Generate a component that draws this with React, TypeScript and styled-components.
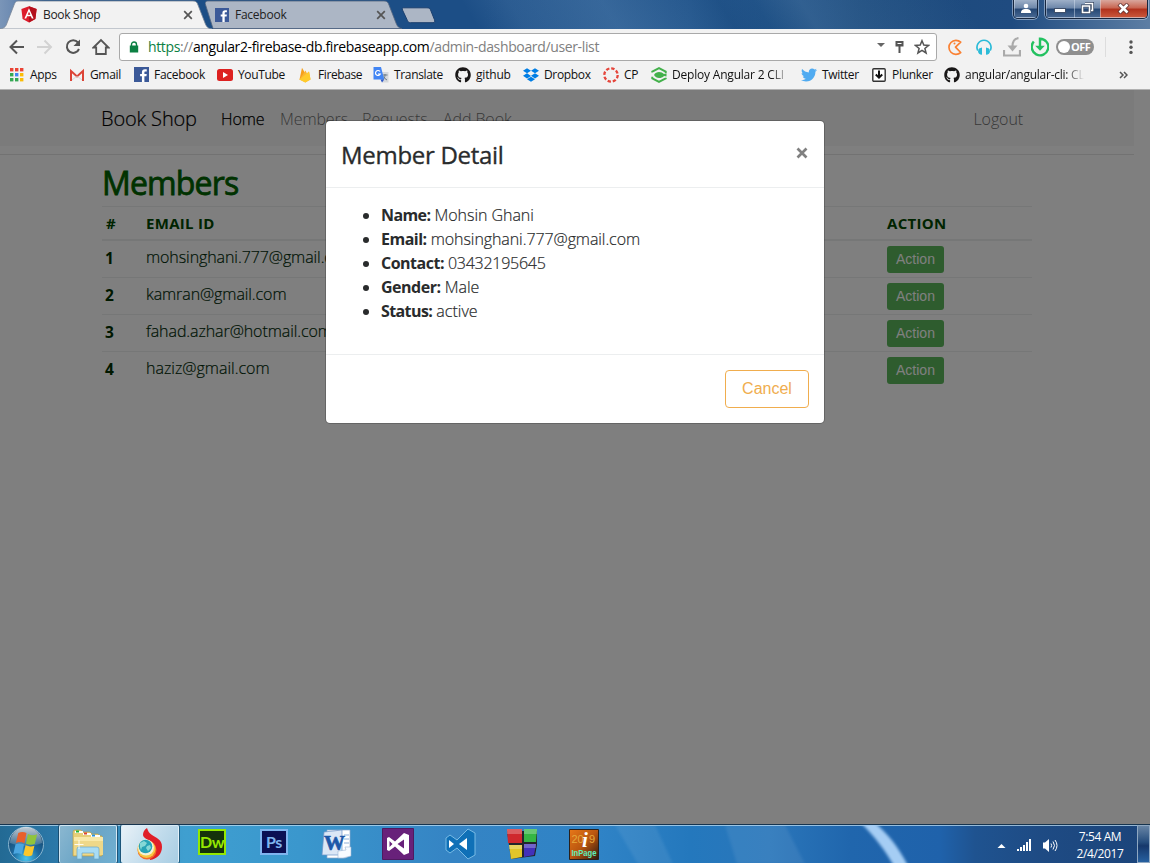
import React from 'react';
import styled, { createGlobalStyle, css } from 'styled-components';
import { FaGithub, FaTwitter, FaDropbox } from 'react-icons/fa';

const Global = createGlobalStyle`
  *{box-sizing:border-box}
  body{margin:0;font-family:"Open Sans","Noto Sans",sans-serif;overflow:hidden}
  svg{display:block;flex:none}
`;

const Screen = styled.div`width:1150px;height:863px;display:flex;flex-direction:column;overflow:hidden;`;

/* ---------- browser chrome ---------- */
const TabStrip = styled.div`
  height:29px;display:flex;align-items:flex-start;position:relative;flex:none;
  background:
    linear-gradient(90deg,#7a95b8 0,#6d8bb2 12px,transparent 45px),
    linear-gradient(58deg,transparent 0 41%,rgba(120,160,200,.16) 45%,rgba(120,160,200,.26) 53%,rgba(10,50,100,.12) 63%,transparent 66%,rgba(110,150,190,.24) 70%,transparent 84%),
    linear-gradient(90deg,#1c4e86 0,#1c4e86 42%,#24588f 60%,#1b4a7c 75%,#1f4b80 88%,#5d7ea4 100%);
`;
const Tab = styled.div<{ $w: number; $front?: boolean; $pad: number }>`
  position:relative;width:${p => p.$w}px;height:29px;display:flex;align-items:center;
  padding:0 ${p => (p.$front ? 19 : 17)}px 0 ${p => p.$pad}px;z-index:${p => (p.$front ? 2 : 1)};
  & + &{margin-left:-7px}
`;
const TabShape = styled.svg`position:absolute;left:0;top:0;z-index:-1;`;
const TabTitle = styled.span<{ $ls: number }>`font-size:12px;line-height:16px;color:#222;flex:1;margin-left:6px;white-space:nowrap;letter-spacing:${p => p.$ls}px;`;
const NewTab = styled.svg`margin:7px 0 0 -2px;`;
const Spacer = styled.div`flex:1;`;
const WindowButtons = styled.div`
  display:flex;height:19px;border:1px solid #16263f;border-top:0;border-radius:0 0 5px 5px;overflow:hidden;
  box-shadow:0 0 0 1px rgba(200,215,235,.55);
  & + &{margin:0 2px 0 7px}
`;
const WinBtn = styled.div<{ $w: number; $close?: boolean }>`
  width:${p => p.$w}px;height:18px;display:flex;align-items:center;justify-content:center;padding-bottom:2px;
  background:${p => (p.$close
    ? 'linear-gradient(#d9a79d 0,#c8634f 45%,#b0311c 50%,#cc5a3d 100%)'
    : 'linear-gradient(#9eb0c8 0,#6c86a9 45%,#244673 50%,#4a6a94 100%)')};
  box-shadow:inset 0 -1px 0 rgba(220,230,245,.6),inset 1px 0 0 rgba(220,230,245,.45);
`;

const Toolbar = styled.div`height:36px;flex:none;background:#f2f2f2;display:flex;align-items:center;padding:0 11px 0 8px;`;
const NavIcons = styled.div`display:flex;gap:10px;width:111px;`;
const AddressBar = styled.div`
  width:818px;height:28px;background:#fff;border:1px solid #a9a9a9;border-radius:3px;
  display:flex;align-items:center;padding:0 6px 0 9px;
`;
const Url = styled.div`
  font-size:14px;line-height:20px;letter-spacing:-.36px;color:#000;flex:1;margin-left:9px;white-space:nowrap;
`;
const Secure = styled.span`color:#0b8043;`;
const Muted = styled.span`color:#808080;`;
const UrlActions = styled.div`display:flex;align-items:center;gap:9px;`;
const Extensions = styled.div`display:flex;align-items:center;gap:10px;margin-left:9px;`;
const Toggle = styled.div`
  width:38px;height:16px;border-radius:8px;background:#8f8f8f;color:#fff;font:700 11px/16px "Open Sans",sans-serif;
  padding-left:15px;letter-spacing:-.5px;position:relative;margin-left:-3px;
  &::before{content:"";position:absolute;left:2px;top:2px;width:12px;height:12px;border-radius:50%;background:#fff}
`;
const Divider = styled.div`width:1px;height:20px;background:#ddd;margin-left:11px;`;
const Dots = styled.svg`margin-left:23px;`;

const Bookmarks = styled.div`
  height:25px;flex:none;background:#f2f2f2;border-bottom:1px solid #b1b1b1;display:flex;padding-left:9px;
`;
const Bookmark = styled.div<{ $w: number }>`width:${p => p.$w}px;display:flex;align-items:center;gap:5px;height:19px;flex:none;`;
const BookmarkText = styled.span<{ $ls: number; $fade?: number }>`
  font-size:12px;line-height:16px;color:#111;white-space:nowrap;letter-spacing:${p => p.$ls}px;
  ${p => p.$fade && css`width:${p.$fade}px;mask-image:linear-gradient(90deg,#000 84%,transparent 100%);`}
`;

/* ---------- page ---------- */
const Viewport = styled.main`height:734px;flex:none;position:relative;background:#fff;overflow:hidden;color:#292b2c;`;
const PageBody = styled.div`width:1134px;`;
const Navbar = styled.nav`height:56px;background:#f7f7f7;padding:1px 111px 0 101px;display:flex;align-items:center;`;
const Brand = styled.span`font-size:20px;line-height:30px;letter-spacing:-.15px;font-weight:300;width:120px;color:#000;-webkit-text-stroke:.2px;`;
const NavLink = styled.span<{ $w?: number; $active?: boolean }>`
  font-size:16px;line-height:24px;font-weight:300;
  color:${p => (p.$active ? '#000' : '#707070')};letter-spacing:${p => (p.$active ? -.1 : -.1)}px;
  ${p => p.$active && css`-webkit-text-stroke:.25px;`}
  ${p => p.$w && css`width:${p.$w}px;`} white-space:nowrap;
`;
const Rule = styled.hr`border:0;border-top:1px solid #e5e5e5;margin:8px 0 0;`;
const Container = styled.section`margin:0 102px;color:#006400;`;
const Title = styled.h1`font-size:32px;line-height:36px;font-weight:400;margin:10px 0 5px;letter-spacing:-.85px;color:#006400;-webkit-text-stroke:.8px;`;
const Row = styled.div<{ $head?: boolean }>`
  display:grid;grid-template-columns:40px 741px 1fr;align-items:center;height:${p => (p.$head ? 33 : 37)}px;
  border-top:1px solid #eceeef;padding-left:4px;font-size:${p => (p.$head ? 15 : 16)}px;
  letter-spacing:${p => (p.$head ? .3 : 0)}px;
  font-weight:${p => (p.$head ? 700 : 300)};color:${p => (p.$head ? '#004800' : '#002a08')};
  ${p => !p.$head && css`&:nth-child(3){border-top:2px solid #eceeef;height:38px}`}
`;
const Index = styled.b`color:#003000;font-size:15.500px;font-weight:700;padding-bottom:3px;margin-left:-1px;`;
const Email = styled.span<{ $ls: number }>`letter-spacing:${p => p.$ls}px;padding-bottom:4px;-webkit-text-stroke:.2px;`;
const ActionBtn = styled.button`
  display:block;width:57px;height:27px;border:0;border-radius:3px;background:#5cb85c;color:#fff;padding:0;
  font:14px/21px "Liberation Sans",sans-serif;
`;
const Backdrop = styled.div`position:absolute;inset:0;background:rgba(0,0,0,.5);`;
const Dialog = styled.section`
  position:absolute;left:325px;top:30px;width:500px;height:304px;background:#fff;background-clip:padding-box;
  border:1px solid rgba(0,0,0,.2);border-radius:5px;display:flex;flex-direction:column;
`;
const DialogHeader = styled.header`
  height:67px;border-bottom:1px solid #eceeef;padding:0 16px 2px 15px;display:flex;align-items:center;justify-content:space-between;
`;
const DialogTitle = styled.h4`margin:3px 0 0;font-size:24px;line-height:36px;font-weight:400;letter-spacing:-.3px;-webkit-text-stroke:.35px;`;
const DialogBody = styled.div`height:167px;padding:15px;border-bottom:1px solid #eceeef;`;
const Details = styled.ul`margin:0;padding-left:40px;font-size:16px;line-height:24px;`;
const Detail = styled.li<{ $ls: number }>`letter-spacing:${p => p.$ls}px;font-weight:300;`;
const Value = styled.span`-webkit-text-stroke:.2px;`;
const Label = styled.b<{ $ls: number }>`font-weight:700;letter-spacing:${p => p.$ls}px;`;
const DialogFooter = styled.footer`flex:1;padding:15px;display:flex;justify-content:flex-end;`;
const CancelBtn = styled.button`
  width:84px;height:38px;border:1px solid #f0ad4e;border-radius:4px;background:#fff;color:#f0ad4e;padding:0;
  font:16px/24px "Liberation Sans",sans-serif;
`;

/* ---------- taskbar ---------- */
const Taskbar = styled.footer`
  height:39px;flex:none;border-top:1px solid #17344e;display:flex;position:relative;overflow:hidden;
  box-shadow:inset 0 1px 0 rgba(190,220,240,.75);
  background:linear-gradient(90deg,#236a94 0,#2b78a8 55px,#3f9fd0 185px,#3a97cd 300px,#3584c4 450px,#2f83c6 600px,#2478bd 690px,#2a76ba 770px,#2066ad 850px,#1f62ab 940px,#1f5390 975px,#1e4b84 1040px,#1b447a 1150px);
`;
const Streak = styled.svg`position:absolute;left:590px;top:0;`;
const StartSlot = styled.div`width:59px;padding:1px 0 0 7px;position:relative;`;
const TaskButton = styled.div<{ $on?: 'open' | 'active' }>`
  width:58px;height:38px;margin-right:4px;display:flex;align-items:center;justify-content:center;position:relative;
  ${p => p.$on && css`
    border:1px solid rgba(225,240,250,.85);border-bottom:0;border-radius:2px;box-shadow:0 0 0 1px rgba(15,55,85,.65);
    background:${p.$on === 'active'
      ? 'linear-gradient(120deg,#e8f1f7,#c2dcec 55%,#a8cde3)'
      : 'linear-gradient(120deg,#8ab7d0,#6ba5c6 50%,#70b0d2)'};
  `}
`;
const SquareIcon = styled.div<{ $bg: string; $fg: string; $s: number }>`
  width:${p => p.$s}px;height:${p => p.$s - 2}px;border:2px solid ${p => p.$fg};background:${p => p.$bg};color:${p => p.$fg};
  display:flex;align-items:center;justify-content:center;font:700 16px/20px Lato,sans-serif;letter-spacing:-.4px;
  margin-bottom:4px;
`;
const Tray = styled.div`display:flex;align-items:center;gap:10px;position:relative;padding-top:3px;margin-right:0;`;
const Clock = styled.div`
  position:relative;width:72px;text-align:center;color:#fff;font-size:12px;line-height:17px;letter-spacing:-.4px;
  padding:3px 2px 0 0;margin:0 0 0 7px;white-space:nowrap;
`;
const ShowDesktop = styled.div`
  position:relative;width:13px;height:38px;border:1px solid #8fa8c2;background:linear-gradient(#6784a5,#254d7d 45%,#16386b 55%,#2760a0);
`;

const FacebookIcon = ({ s = 14 }: { s?: number }) => (
  <svg width={s} height={s} viewBox="0 0 14 14"><path fill="#3b5998" d="M0 0h14v14H0z" /><path fill="#fff" d="M7.4 14V8.6H5.7V6.5h1.7V5c0-1.9 1-2.8 2.8-2.8h1.7v2.1h-1.1c-.9 0-1.1.3-1.1 1v1.2h2.2l-.3 2.1H9.7V14z" /></svg>
);
const CloseIcon = () => (
  <svg width="10" height="10" viewBox="0 0 10 10"><path d="M1.2 1.2l7.6 7.6M8.8 1.2L1.2 8.8" stroke="#555" strokeWidth="1.7" /></svg>
);
const AngularIcon = () => (
  <svg width="16" height="17" viewBox="0 0 16 17"><path fill="#dd1b2b" d="M8 .3l7.6 2.7-1.2 10L8 16.6 1.6 13 .4 3z" /><path fill="#b3101c" d="M8 .3l7.6 2.7-1.2 10L8 16.6z" /><path fill="#fff" fillRule="evenodd" d="M8 2.2L3.4 12.6h1.8l.9-2.3h3.8l.9 2.3h1.8zM8 5.7l1.3 3.1H6.7z" /></svg>
);

const AppsIcon = () => {
  const c = ['#ea4335', '#ea4335', '#ea4335', '#34a853', '#4285f4', '#fbbc05', '#34a853', '#34a853', '#fbbc05'];
  return <svg width="16" height="16">{c.map((f, i) => <rect key={i} x={1 + (i % 3) * 5} y={1 + Math.floor(i / 3) * 5} width="3.4" height="3.4" fill={f} />)}</svg>;
};
const GmailIcon = () => <svg width="16" height="16"><path fill="#f3f3f3" d="M1 3h14v11H1z" /><path fill="none" stroke="#dc4437" strokeWidth="2" d="M2 14V4l6 5.5L14 4v10" /><path d="M3 13l5-4 5 4" fill="none" stroke="#ccc" strokeWidth=".7" /></svg>;
const YoutubeIcon = () => <svg width="16" height="16"><rect y="2" width="16" height="12" rx="2.5" fill="#dd2120" /><path fill="#fff" d="M6 5l5 3-5 3z" /></svg>;
const FirebaseIcon = () => <svg width="16" height="16"><path fill="#f6a01a" d="M2.5 12.5L5 .8 8 6l-4 7z" /><path fill="#fbb533" d="M2.5 12.5l6-9 1.5 3 2-2 1.5 8-5.2 3z" /><path fill="#ffcb2b" d="M2.5 12.5L12 4.5l1.5 8-5.2 3z" /></svg>;
const TranslateIcon = () => <svg width="16" height="16"><path fill="#d5d8dc" d="M7 5h8.5v10.5H9z" /><path d="M9.5 8h5M12 7v1c0 2-1 4-2.5 5M10.5 9.5c.7 1.6 2 2.7 3.5 3.5" fill="none" stroke="#6d7a85" /><path fill="#4285f4" d="M.5 0H8l3.2 12.5H.5z" /><path fill="#2a56c6" d="M7.5 12.5h3.7L9 15.5z" /><path d="M7 4.5A2.5 2.5 0 107.3 7H5" fill="none" stroke="#fff" strokeWidth="1.2" /></svg>;
const CpIcon = () => <svg width="16" height="16"><circle cx="8" cy="8" r="6.7" fill="none" stroke="#e5453b" strokeWidth="2.3" strokeDasharray="3.4 1.86" /></svg>;
const CodeshipIcon = () => <svg width="16" height="16"><path d="M1.3 5.4V4.7L8 1.2l6.7 3.5v1.6M1.3 9.8v1.5L8 14.8l6.7-3.5v-.6" fill="none" stroke="#43b14b" strokeWidth="2" /><path fill="#43b14b" d="M3 8c1.2-2 3-2.9 5-2.9S11.800 6 13 7l2.500-.5v3L13 9c-1.200 1.500-3 2-5 2S4.200 10 3 8z" /></svg>;
const PlunkerIcon = () => <svg width="16" height="14"><rect x="1.800" y=".8" width="12.400" height="12.400" rx="1" fill="#fff" stroke="#333" strokeWidth="1.400" /><path d="M8 2.500v6.500M4.800 6.500L8 9.700l3.200-3.200" fill="none" stroke="#111" strokeWidth="2" /></svg>;

type Mark = { t: string; w: number; ls: number; fade?: number; icon: React.ReactNode };
const marks: Mark[] = [
  { t: 'Apps', w: 60, ls: -0.3, icon: <AppsIcon /> },
  { t: 'Gmail', w: 65, ls: -0.35, icon: <GmailIcon /> },
  { t: 'Facebook', w: 83, ls: -0.3, icon: <FacebookIcon s={15} /> },
  { t: 'YouTube', w: 80, ls: -0.35, icon: <YoutubeIcon /> },
  { t: 'Firebase', w: 76, ls: -0.4, icon: <FirebaseIcon /> },
  { t: 'Translate', w: 82, ls: -0.35, icon: <TranslateIcon /> },
  { t: 'github', w: 68, ls: -0.2, icon: <FaGithub size={16} color="#191717" /> },
  { t: 'Dropbox', w: 80, ls: -0.35, icon: <FaDropbox size={16} color="#007ee5" /> },
  { t: 'CP', w: 48, ls: -0.3, icon: <CpIcon /> },
  { t: 'Deploy Angular 2 CLI', w: 150, ls: -0.2, fade: 118, icon: <CodeshipIcon /> },
  { t: 'Twitter', w: 70, ls: -0.35, icon: <FaTwitter size={16} color="#50abf1" /> },
  { t: 'Plunker', w: 73, ls: -0.3, icon: <PlunkerIcon /> },
  { t: 'angular/angular-cli: CL', w: 175, ls: -0.25, fade: 119, icon: <FaGithub size={16} color="#191717" /> },
];

const rows = [
  ['1', 'mohsinghani.777@gmail.com', -0.08], ['2', 'kamran@gmail.com', -0.08],
  ['3', 'fahad.azhar@hotmail.com', -0.08], ['4', 'haziz@gmail.com', 0],
] as const;
const details = [
  ['Name:', 'Mohsin Ghani', -0.6, -0.05], ['Email:', 'mohsinghani.777@gmail.com', -0.5, -0.08],
  ['Contact:', '03432195645', -0.5, -0.25], ['Gender:', 'Male', -0.5, 0], ['Status:', 'active', -0.6, 0],
] as const;

const StartOrb = () => (
  <svg width="38" height="37" viewBox="0 0 38 37">
    <defs>
      <radialGradient id="orb" cx="50%" cy="90%" r="85%"><stop offset="0" stopColor="#48c5ed" /><stop offset=".45" stopColor="#1c6aa0" /><stop offset="1" stopColor="#174062" /></radialGradient>
      <linearGradient id="gloss" x2="0" y2="1"><stop stopColor="#fff" stopOpacity=".75" /><stop offset="1" stopColor="#fff" stopOpacity=".12" /></linearGradient>
    </defs>
    <circle cx="19" cy="18.500" r="17.500" fill="url(#orb)" stroke="#88b5cf" />
    <path d="M3 17a16 16 0 0132 0c-9 4-22 4-32 0z" fill="url(#gloss)" />
    <g transform="translate(-3.500 -3.500) scale(1.180)">
      <path fill="#e8602c" d="M12.500 9c2.500-1.500 4.800-1.200 7 0l-1.800 8.500c-2.500-1.200-4.800-1.400-7.200-.2z" />
      <path fill="#90c43c" d="M20.700 9.700c2.700 1.300 5.200 1.300 7.800.2l-2 8.400c-2.600 1-5 .8-7.500-.3z" />
      <path fill="#4ba6e0" d="M10.200 18.500c2.300-1.200 4.600-1 7.200.2l-1.900 8.400c-2.400-1.200-4.700-1.300-7.200-.2z" />
      <path fill="#fbc72b" d="M18.700 19.300c2.600 1.200 5 1.300 7.500.3l-1.900 8.200c-2.500 1.200-5 .9-7.500-.3z" />
    </g>
  </svg>
);
const ExplorerIcon = () => (
  <svg width="34" height="31" viewBox="0 0 34 31"><path fill="#e7cf79" stroke="#b99a45" strokeWidth=".6" d="M2 3q0-2 2-2h6l2 2h7l2 2h6l2 2h2v20H2z" /><path fill="#f8e9a9" d="M3 8h29v18H3z" /><path fill="#fff" d="M4 2h8v2H4zM12 4h8v2h-8zM20 6h9v2h-9z" /><path fill="#25b236" d="M5 1.500h3v2H5z" /><path fill="#dd4334" d="M13 3.500h3v2h-3z" /><path fill="#2a93e0" d="M21 5.500h3v2h-3z" /><path fill="#eed889" d="M3 12h29v14H3z" /><path fill="#a8dcf4" stroke="#6ca6c6" strokeWidth=".7" d="M6 30V20q0-2 2-2h18q2 0 2 2v10h-5v-6H11v6z" /><path d="M8 11v9M3.500 15.500h9" stroke="#fff" strokeWidth="1" opacity=".9" /></svg>
);
const TorchIcon = () => (
  <svg width="28" height="33" viewBox="0 0 28 33"><path fill="#e01e28" d="M11 0C8 2 7 4 7 7c0 2 2 3 5 5l2 20c7-1 12-6 12-13 0-8-6-9-10-12-3-2-4-4-5-7z" /><circle cx="11" cy="22" r="9.500" fill="#f26a2a" /><circle cx="10.500" cy="21" r="9" fill="#f8c842" /><circle cx="10" cy="19.500" r="8" fill="#f5f1d6" /><circle cx="9.500" cy="18.500" r="6.800" fill="#28a3b5" /><path fill="#86d8d6" d="M4 15l4-2 3 2-2 3-3 1-1 3-1-3zM11 18l3-1 1 3-3 3-2-3z" /></svg>
);
const WordIcon = () => (
  <svg width="31" height="31" viewBox="0 0 31 31"><path fill="#fff" stroke="#8fa9cc" strokeWidth=".7" d="M6 1h23v26l-5 2H6z" /><path fill="#dbe7f6" stroke="#6b92c5" strokeWidth=".7" d="M3 3l18-2v25H1z" /><path d="M23 6h5M23 10h5M23 14h5" stroke="#8fb0d8" /><text x="13.500" y="21" textAnchor="middle" fontSize="21" fontWeight="700" fontFamily="Liberation Serif, serif" fill="#1c57a8" stroke="#1c57a8" strokeWidth=".7">W</text><path fill="#f8fbff" stroke="#9cb5d3" strokeWidth=".6" d="M17 22l8-1-1-3 6 0v9l-8 2h-5z" /></svg>
);
const VsIcon = () => (
  <svg width="32" height="32" viewBox="0 0 32 32"><path fill="#68217a" stroke="#4f1a60" d="M.5.5h31v31H.500z" /><path fill="#fff" fillRule="evenodd" d="M5 10l2-1 6 4.500L22 5l5 2v18l-5 2-9-8.500L7 23l-2-1zm2.500 3v6l3-3zM22 11.500L15.500 16l6.500 4.500z" /></svg>
);
const CodeIcon = () => (
  <svg width="33" height="32" viewBox="0 0 33 32"><path fill="#0f70b7" stroke="#78bbe5" strokeWidth="1" d="M2 10l4-3 7 5L24 1l7 4v22l-7 4-11-11-7 5-4-3z" /><path fill="#fff" d="M5 12l5 4-5 4zM23 10v12l-8-6z" /></svg>
);
const BlocksIcon = () => (
  <svg width="32" height="32" viewBox="0 0 32 32"><path fill="#24252b" d="M1 3h30v14l-2 11-24 3z" /><path fill="#cf282d" d="M1 1h15v14H2z" /><path fill="#35b643" d="M18 1h13l-1 13H18z" /><path fill="#e0c52a" d="M3 17h13v12l-11 2z" /><path fill="#4331ba" d="M18 16h12l-2 11-10 2z" /><path fill="#fff" opacity=".25" d="M1 1h15v5H1zM18 1h13v5H18zM3 17h13v4H3zM18 16h12v4H18z" /></svg>
);
const InpageIcon = () => (
  <svg width="30" height="31" viewBox="0 0 30 31"><defs><linearGradient id="inp" x2="1" y2="1"><stop stopColor="#e87818" /><stop offset=".5" stopColor="#b9560f" /><stop offset="1" stopColor="#2c1710" /></linearGradient></defs><path fill="url(#inp)" stroke="#28201c" d="M.500.500h29v30H.500z" /><text x="2.500" y="14" fontSize="11" fontFamily="Liberation Sans, sans-serif" fill="#e5a83b">20</text><text x="20" y="14" fontSize="11" fontFamily="Liberation Sans, sans-serif" fill="#e5a83b">9</text><text x="16" y="18" textAnchor="middle" fontSize="21" fontStyle="italic" fontWeight="700" fontFamily="Liberation Serif, serif" fill="#fff">i</text><text x="2.500" y="27" fontSize="8.500" fontWeight="700" textLength="25" lengthAdjust="spacingAndGlyphs" fontFamily="Liberation Sans, sans-serif" fill="#5ff0be">InPage</text></svg>
);

export default function App() {
  return (
    <Screen>
      <Global />
      <TabStrip>
        <Tab $w={212} $front $pad={21}>
          <TabShape width="212" height="29"><path d="M0 29C5 28 6 26 7 23L14 5C15.500 1.500 16 1 19 1H193c3 0 4 1 5 4l7 18c1.500 4 3 5.500 7 6z" fill="#f2f2f2" stroke="#788597" strokeWidth=".8" /></TabShape>
          <AngularIcon /><TabTitle $ls={-0.3}>Book Shop</TabTitle><CloseIcon />
        </Tab>
        <Tab $w={198} $pad={10}>
          <TabShape width="198" height="29"><path d="M0 3C1 1 2 1 4 1H179c3 0 4 1 5 4l7 18c1.500 4 3 5 6 5.500H8z" fill="#acb6c5" stroke="#53657f" strokeWidth=".8" /></TabShape>
          <FacebookIcon /><TabTitle $ls={-0.25}>Facebook</TabTitle><CloseIcon />
        </Tab>
        <NewTab width="36" height="18"><path d="M2.500.800H26c2 0 3 .700 3.500 2l4 10c.700 2 .300 2.900-1.500 2.900H9.500c-1.500 0-2.500-.700-3-2L1.500 3C1 1.500 1.300.800 2.500.800z" fill="#acb6c5" stroke="#1a3f6e" /></NewTab>
        <Spacer />
        <WindowButtons>
          <WinBtn $w={23}><svg width="12" height="11"><circle cx="6" cy="3" r="2.300" fill="#fff" /><path fill="#fff" d="M1 10c0-3 1.500-4 5-4s5 1 5 4z" /></svg></WinBtn>
        </WindowButtons>
        <WindowButtons>
          <WinBtn $w={28}><svg width="12" height="9"><rect x=".5" y="4.500" width="11" height="4" fill="#fff" stroke="#40506a" /></svg></WinBtn>
          <WinBtn $w={26}><svg width="13" height="12"><path d="M4 1.500h7.500v7H10M1.500 4h7v6.500h-7z" fill="none" stroke="#344560" strokeWidth="3" /><path d="M4 1.500h7.500v7H10M1.500 4h7v6.500h-7z" fill="none" stroke="#fff" strokeWidth="1.600" /></svg></WinBtn>
          <WinBtn $w={47} $close><svg width="13" height="11"><path d="M2 1l9 9M11 1l-9 9" stroke="#5f3030" strokeWidth="4.200" /><path d="M2.500 1.500l8 8M10.500 1.500l-8 8" stroke="#fff" strokeWidth="2.600" /></svg></WinBtn>
        </WindowButtons>
      </TabStrip>

      <Toolbar>
        <NavIcons>
          <svg width="18" height="18"><path d="M16 9H3M9 2.500L2.500 9 9 15.500" fill="none" stroke="#555" strokeWidth="2" /></svg>
          <svg width="18" height="18"><path d="M1 9h13M8.500 2.500L15 9l-6.500 6.500" fill="none" stroke="#d2d2d2" strokeWidth="2" /></svg>
          <svg width="18" height="18"><path d="M14 4.500A6.300 6.300 0 1015 11" fill="none" stroke="#555" strokeWidth="2" /><path fill="#555" d="M16 1.500V8H9.500z" /></svg>
          <svg width="18" height="18"><path d="M1.500 9.500L9 2l7.500 7.500h-2.700V16H4.200V9.500z" fill="none" stroke="#555" strokeWidth="1.800" /></svg>
        </NavIcons>
        <AddressBar>
          <svg width="10" height="12"><path d="M2.500 5V3.500a2.500 2.500 0 015 0V5" fill="none" stroke="#0b8043" strokeWidth="1.400" /><rect x=".8" y="4.500" width="8.400" height="7" fill="#0b8043" /></svg>
          <Url><Secure>https</Secure><Muted>://</Muted>angular2-firebase-db.firebaseapp.com<Muted>/admin-dashboard/user-list</Muted></Url>
          <UrlActions>
            <svg width="8" height="13"><path fill="#666" d="M0 2h8L4 6z" /></svg>
            <svg width="11" height="14"><path fill="#555" d="M1.500 1h8v5.500H6.500V13h-2V6.500h-3z" /><path fill="#fff" d="M3.500 3h4v1h-4z" /></svg>
            <svg width="16" height="16" viewBox="0 0 16 16"><path d="M8 1.700l1.800 4.400 4.700.3-3.600 3 1.200 4.600L8 11.400 3.900 14l1.200-4.600-3.600-3 4.700-.3z" fill="none" stroke="#555" strokeWidth="1.500" /></svg>
          </UrlActions>
        </AddressBar>
        <Extensions>
          <svg width="18" height="18"><path d="M14.700 4.200A7 7 0 1014.700 14.500L9.500 9.200z" fill="none" stroke="#fa8133" strokeWidth="1.700" strokeLinejoin="round" /><circle cx="8.500" cy="5.500" r="1" fill="#fa8133" /></svg>
          <svg width="19" height="18"><path d="M3.800 12.500A7 7 0 1116.200 12.500" fill="none" stroke="#2bbbd8" strokeWidth="1.700" /><path fill="#2bbbd8" d="M5 10.500l3-1v7.200c-2.500 0-4-1.700-4-3.500zM15 10.500l-3-1v7.200c2.500 0 4-1.700 4-3.500z" /></svg>
          <svg width="18" height="20"><path d="M1 13v5.500h16V13" fill="none" stroke="#aaa" strokeWidth="2.200" /><path d="M15.500 1.200C11 1.500 9.500 4.500 9.500 9.500" fill="none" stroke="#aaa" strokeWidth="2.200" /><path fill="#aaa" d="M4.500 8.500h10l-5 6z" /></svg>
          <svg width="18" height="20" viewBox="1 0 18 20"><path d="M10 10V1.700A8.300 8.300 0 113.800 4.500" fill="none" stroke="#23c160" strokeWidth="2.400" /><path fill="#23c160" d="M5.200 8.800h9.600L10 13.800z" /></svg>
          <Toggle>OFF</Toggle>
        </Extensions>
        <Divider />
        <Dots width="4" height="16"><circle cx="2" cy="3" r="1.700" fill="#555" /><circle cx="2" cy="8.200" r="1.700" fill="#555" /><circle cx="2" cy="13.400" r="1.700" fill="#555" /></Dots>
      </Toolbar>

      <Bookmarks>
        {marks.map(m => <Bookmark key={m.t} $w={m.w}>{m.icon}<BookmarkText $ls={m.ls} $fade={m.fade}>{m.t}</BookmarkText></Bookmark>)}
        <Bookmark $w={12}><svg width="9" height="8"><path d="M1 1l3 3-3 3M5 1l3 3-3 3" fill="none" stroke="#555" strokeWidth="1.500" /></svg></Bookmark>
      </Bookmarks>

      <Viewport>
        <PageBody>
          <Navbar>
            <Brand>Book Shop</Brand>
            <NavLink $w={59} $active>Home</NavLink><NavLink $w={82}>Members</NavLink><NavLink $w={81}>Requests</NavLink><NavLink>Add Book</NavLink>
            <Spacer /><NavLink>Logout</NavLink>
          </Navbar>
          <Rule />
          <Container>
            <Title>Members</Title>
            <Row $head><span>#</span><span>EMAIL ID</span><span>ACTION</span></Row>
            {rows.map(([n, mail, ls]) => <Row key={n}><Index>{n}</Index><Email $ls={ls}>{mail}</Email><ActionBtn>Action</ActionBtn></Row>)}
          </Container>
        </PageBody>
        <Backdrop />
        <Dialog>
          <DialogHeader>
            <DialogTitle>Member Detail</DialogTitle>
            <svg width="12" height="12"><path d="M1.500 1.500l9 9M10.500 1.500l-9 9" stroke="#808080" strokeWidth="2.700" /></svg>
          </DialogHeader>
          <DialogBody>
            <Details>
              {details.map(([k, v, kl, vl]) => <Detail key={k} $ls={vl}><Label $ls={kl}>{k}</Label> <Value>{v}</Value></Detail>)}
            </Details>
          </DialogBody>
          <DialogFooter><CancelBtn>Cancel</CancelBtn></DialogFooter>
        </Dialog>
      </Viewport>

      <Taskbar>
        <Streak width="350" height="39">
          <defs><filter id="soft"><feGaussianBlur stdDeviation="1.500" /></filter></defs>
          <path d="M25 0h40l18 39H48zM135 0h60l20 39h-68z" fill="#fff" opacity=".07" filter="url(#soft)" />
          <path d="M270-3h14c14 12 24 24 34 44h-14C295 25 285 12 270-3z" fill="#a5cdf4" filter="url(#soft)" />
        </Streak>
        <StartSlot><StartOrb /></StartSlot>
        <TaskButton $on="open"><ExplorerIcon /></TaskButton>
        <TaskButton $on="active"><TorchIcon /></TaskButton>
        <TaskButton><SquareIcon $bg="#15330b" $fg="#94e800" $s={28}>Dw</SquareIcon></TaskButton>
        <TaskButton><SquareIcon $bg="#0b1054" $fg="#7fb4ef" $s={28}>Ps</SquareIcon></TaskButton>
        <TaskButton><WordIcon /></TaskButton>
        <TaskButton><VsIcon /></TaskButton>
        <TaskButton><CodeIcon /></TaskButton>
        <TaskButton><BlocksIcon /></TaskButton>
        <TaskButton><InpageIcon /></TaskButton>
        <Spacer />
        <Tray>
          <svg width="9" height="6"><path fill="#fff" d="M.500 5L4.500 1l4 4z" /></svg>
          <svg width="16" height="13"><path fill="#fff" d="M1 10h2v2H1zM4 8h2v4H4zM7 6h2v6H7zM10 3h2v9h-2zM13 0h2v12h-2z" /></svg>
          <svg width="16" height="15"><path fill="#fff" d="M1 4.500h2L7 1v13l-4-3.500H1z" /><path d="M9 5.500q1.300 2 0 4M11 3.500q3 4 0 8M13 2q4 5.500 0 11" fill="none" stroke="#fff" /></svg>
        </Tray>
        <Clock>7:54 AM<br />2/4/2017</Clock>
        <ShowDesktop />
      </Taskbar>
    </Screen>
  );
}
